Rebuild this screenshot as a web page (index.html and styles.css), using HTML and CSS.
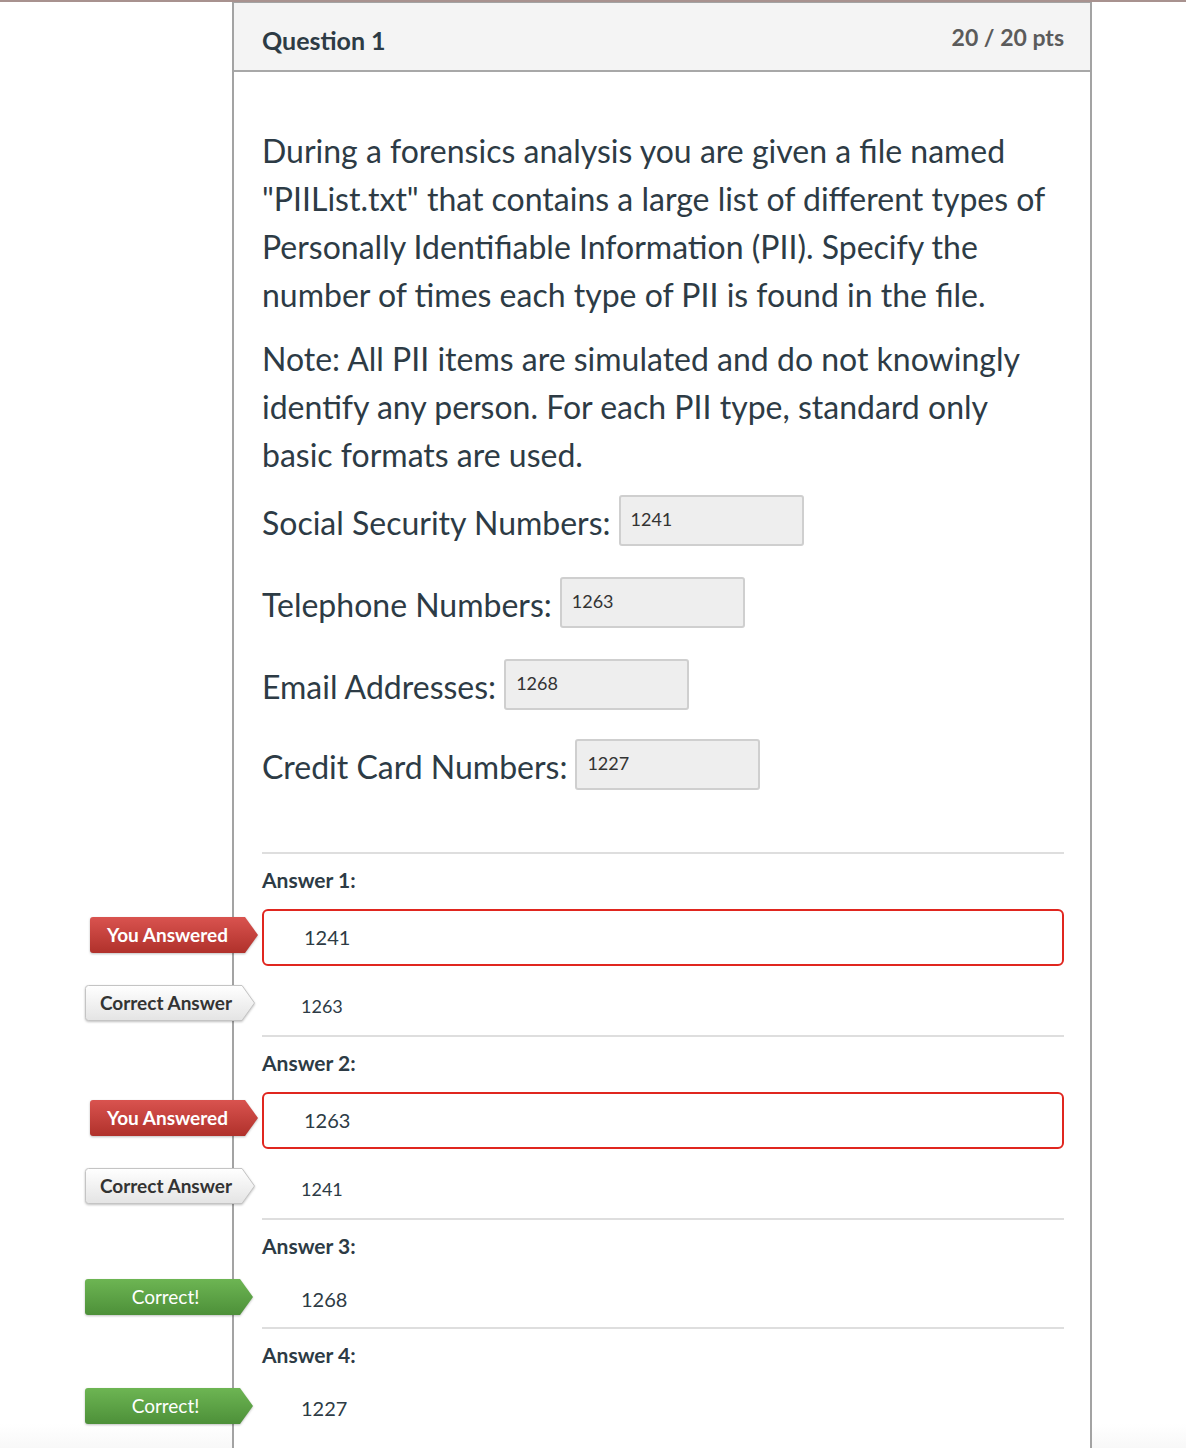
FILE: index.html
```html
<!DOCTYPE html>
<html>
<head>
<meta charset="utf-8">
<link rel="stylesheet" href="styles.css">
</head>
<body>
<div class="topline"></div>
<div class="card">
  <div class="card-header">
    <h2 class="q-title">Question 1</h2>
    <div class="q-points">20 / 20 pts</div>
  </div>
  <div class="card-body">
    <p class="q-text">During a forensics analysis you are given a file named "PIIList.txt" that contains a large list of different types of Personally Identifiable Information (PII). Specify the number of times each type of PII is found in the file.</p>
    <p class="q-text">Note: All PII items are simulated and do not knowingly identify any person. For each PII type, standard only basic formats are used.</p>

    <div class="field r1"><span class="field-label">Social Security Numbers:</span><span class="field-input">1241</span></div>
    <div class="field r2"><span class="field-label">Telephone Numbers:</span><span class="field-input">1263</span></div>
    <div class="field r3"><span class="field-label">Email Addresses:</span><span class="field-input">1268</span></div>
    <div class="field r4"><span class="field-label">Credit Card Numbers:</span><span class="field-input">1227</span></div>

    <div class="answers">
      <div class="answer">
        <div class="answer-title">Answer 1:</div>
        <div class="arow wrong">
          <span class="tag tag-red"><svg class="tag-bg" viewBox="0 0 168 36" preserveAspectRatio="none"><defs><linearGradient id="gr" x1="0" y1="0" x2="0" y2="1"><stop offset="0" stop-color="#d9534f"/><stop offset="1" stop-color="#b0312b"/></linearGradient></defs><path d="M3 0 H155 L168 18 L155 36 H3 Q0 36 0 33 V3 Q0 0 3 0 Z" fill="url(#gr)"/></svg><span class="tag-text">You Answered</span></span>
          <div class="wrong-box">1241</div>
        </div>
        <div class="arow plain">
          <span class="tag tag-gray"><svg class="tag-bg" viewBox="0 0 170 36" preserveAspectRatio="none"><defs><linearGradient id="gg" x1="0" y1="0" x2="0" y2="1"><stop offset="0" stop-color="#ffffff"/><stop offset="1" stop-color="#e4e4e4"/></linearGradient></defs><path d="M3.5 0.5 H157 L169.5 18 L157 35.5 H3.5 Q0.5 35.5 0.5 32.5 V3.5 Q0.5 0.5 3.5 0.5 Z" fill="url(#gg)" stroke="#c4c4c4" stroke-width="1"/></svg><span class="tag-text">Correct Answer</span></span>
          <span class="val-sm">1263</span>
        </div>
      </div>
      <div class="answer">
        <div class="answer-title">Answer 2:</div>
        <div class="arow wrong">
          <span class="tag tag-red"><svg class="tag-bg" viewBox="0 0 168 36" preserveAspectRatio="none"><path d="M3 0 H155 L168 18 L155 36 H3 Q0 36 0 33 V3 Q0 0 3 0 Z" fill="url(#gr)"/></svg><span class="tag-text">You Answered</span></span>
          <div class="wrong-box">1263</div>
        </div>
        <div class="arow plain">
          <span class="tag tag-gray"><svg class="tag-bg" viewBox="0 0 170 36" preserveAspectRatio="none"><path d="M3.5 0.5 H157 L169.5 18 L157 35.5 H3.5 Q0.5 35.5 0.5 32.5 V3.5 Q0.5 0.5 3.5 0.5 Z" fill="url(#gg)" stroke="#c4c4c4" stroke-width="1"/></svg><span class="tag-text">Correct Answer</span></span>
          <span class="val-sm">1241</span>
        </div>
      </div>
      <div class="answer simple">
        <div class="answer-title">Answer 3:</div>
        <div class="arow plain first">
          <span class="tag tag-green"><svg class="tag-bg" viewBox="0 0 168 36" preserveAspectRatio="none"><defs><linearGradient id="gn" x1="0" y1="0" x2="0" y2="1"><stop offset="0" stop-color="#6db553"/><stop offset="1" stop-color="#4d9039"/></linearGradient></defs><path d="M3 0 H155 L168 18 L155 36 H3 Q0 36 0 33 V3 Q0 0 3 0 Z" fill="url(#gn)"/></svg><span class="tag-text">Correct!</span></span>
          <span class="val-lg">1268</span>
        </div>
      </div>
      <div class="answer simple">
        <div class="answer-title">Answer 4:</div>
        <div class="arow plain first">
          <span class="tag tag-green"><svg class="tag-bg" viewBox="0 0 168 36" preserveAspectRatio="none"><path d="M3 0 H155 L168 18 L155 36 H3 Q0 36 0 33 V3 Q0 0 3 0 Z" fill="url(#gn)"/></svg><span class="tag-text">Correct!</span></span>
          <span class="val-lg">1227</span>
        </div>
      </div>
    </div>
  </div>
</div>
</body>
</html>
```

FILE: styles.css
```css
html, body {
  margin: 0;
  padding: 0;
  background: #fff;
}
body {
  font-family: Lato, "Open Sans", "Liberation Sans", sans-serif;
  color: #2d3b45;
  height: 1448px;
  overflow: hidden;
  background: linear-gradient(to bottom, #fff 0, #fff 1424px, #f8f8f8 1448px);
}
.topline {
  height: 2px;
  background: #a8928f;
}
.card {
  margin-left: 232px;
  width: 856px;
  border-left: 2px solid #a3a3a3;
  border-right: 2px solid #a3a3a3;
  border-top: 1px solid #a3a3a3;
  height: 1460px;
  background: #fff;
}
.card-header {
  background: #f4f4f4;
  height: 67px;
  border-bottom: 2px solid #a8a8a8;
  display: flex;
  justify-content: space-between;
  padding: 0 26px 0 28px;
}
.q-title {
  margin: 0;
  padding-top: 22px;
  font-size: 25px;
  line-height: 30px;
  font-weight: 700;
  color: #2d3b45;
}
.q-points {
  padding-top: 19px;
  font-size: 23px;
  line-height: 30px;
  font-weight: 700;
  color: #5b5b5b;
}
.card-body {
  padding: 55px 26px 0 28px;
}
.q-text {
  margin: 0 0 16px;
  font-size: 32px;
  line-height: 48px;
}
.field {
  display: flex;
  align-items: center;
  gap: 8px;
  height: 50px;
  margin-top: 32px;
}
.field.r1 { margin-top: 15px; }
.field.r4 { margin-top: 30px; }
.field-label {
  font-size: 32px;
  line-height: 40px;
  padding-top: 6px;
}
.field-input {
  box-sizing: border-box;
  width: 185px;
  height: 51px;
  background: #eeeeee;
  border: 2px solid #cfcfcf;
  border-radius: 3px;
  padding: 0 0 2px 10px;
  font-size: 18px;
  display: flex;
  align-items: center;
  color: #333;
}
.answers {
  margin-top: 63px;
}
.answer {
  border-top: 2px solid #dedede;
  padding: 14px 0 14px;
}
.answer.simple {
  padding-bottom: 12px;
}
.answer-title {
  font-size: 21px;
  line-height: 24px;
  font-weight: 700;
}
.arow {
  position: relative;
  display: flex;
  align-items: center;
}
.arow.wrong {
  margin-top: 17px;
}
.arow.plain {
  margin-top: 19px;
  height: 36px;
  padding-left: 39px;
}
.arow.plain.first {
  margin-top: 21px;
}
.wrong-box {
  box-sizing: border-box;
  flex: 1;
  height: 57px;
  border: 2px solid #e0261f;
  border-radius: 6px;
  padding: 0 0 2px 40px;
  display: flex;
  align-items: center;
  font-size: 20px;
}
.val-sm {
  font-size: 18px;
  padding-top: 6px;
}
.val-lg {
  font-size: 20px;
  padding-top: 4px;
}
.tag {
  position: absolute;
  top: 50%;
  height: 36px;
  width: 168px;
  display: flex;
  align-items: center;
}
.tag-bg {
  position: absolute;
  left: 0;
  top: 0;
  width: 100%;
  height: 100%;
  filter: drop-shadow(0 1px 1px rgba(0,0,0,0.25));
}
.tag-text {
  position: relative;
  width: 155px;
  text-align: center;
  font-size: 19px;
  font-weight: 700;
  line-height: 36px;
}
.tag-red {
  right: calc(100% + 4px);
  margin-top: -21px;
  color: #fff;
}
.tag-gray {
  width: 170px;
  right: calc(100% + 7px);
  margin-top: -18px;
  color: #333;
}
.tag-gray .tag-text {
  width: 157px;
  padding-left: 5px;
  box-sizing: border-box;
}
.tag-green {
  right: calc(100% + 9px);
  margin-top: -18px;
  color: #fff;
}
.tag-green .tag-text {
  font-weight: 400;
  padding-left: 6px;
  box-sizing: border-box;
}
```
